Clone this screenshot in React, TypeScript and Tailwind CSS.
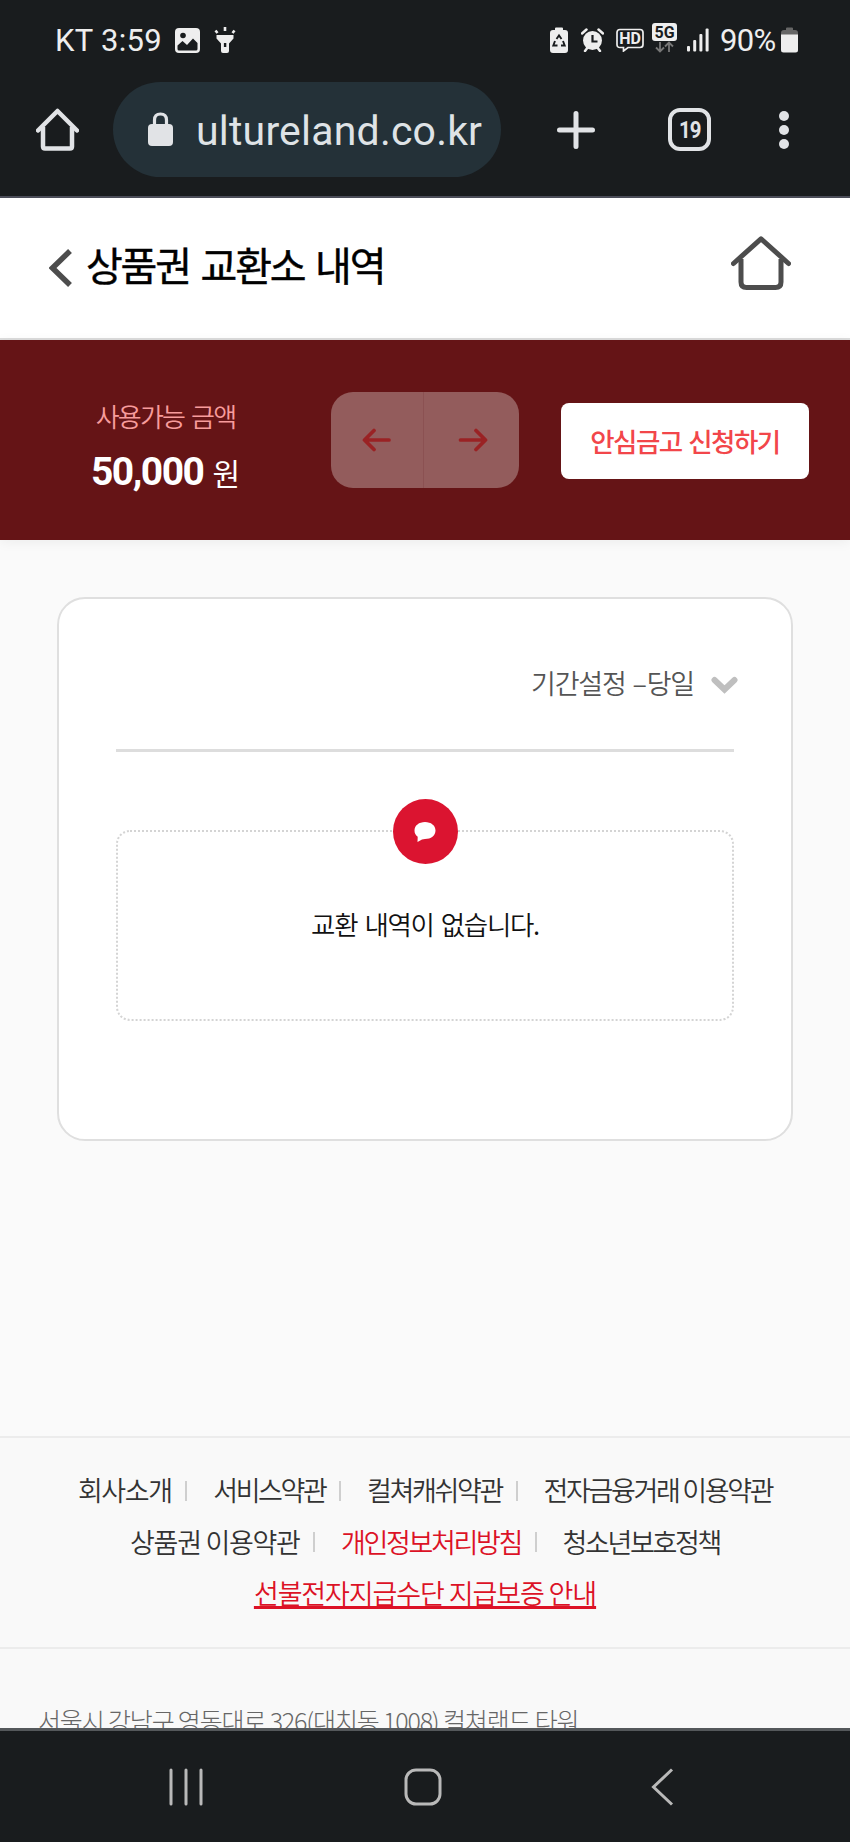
import type { ReactNode } from "react";

function StatusBar() {
  return (
    <div className="flex h-[82px] items-center pr-[52px] pb-[2px] pl-[55px] text-[30px] text-[#eeeeee]">
      <span className="mt-[2px] w-[120px] text-[31px] tracking-[0.3px] whitespace-nowrap">KT 3:59</span>
      <svg width="25" height="25" viewBox="0 0 25 25" fill="none">
        <rect width="25" height="25" rx="4" fill="#eee" />
        <circle cx="8" cy="7.5" r="2.8" fill="#191c1e" />
        <path d="M2.500 17.500 7.500 13l4.500 4L18 10.500l4.500 4.500v6q0 1.500-1.500 1.500H4q-1.500 0-1.500-1.500z" fill="#191c1e" />
      </svg>
      <svg className="ml-[14px]" width="22" height="28" viewBox="0 0 22 28" fill="#eee">
        <path d="M2.500 9h17v3.500L15 17.500V25q0 2-2 2H9q-2 0-2-2v-7.500L2.500 12.500z" />
        <path d="M11 1v4M1.500 4.500l2 2.500M20.500 4.500l-2 2.500" stroke="#eee" strokeWidth="2.600" />
        <rect x="9.900" y="17" width="2.400" height="4" fill="#191c1e" />
      </svg>

      <div className="ml-auto flex items-center">
        <svg width="18" height="27" viewBox="0 0 18 27" fill="none">
          <path d="M5 3V1.500Q5 .5 6 .5h6q1 0 1 1V3h2q3 0 3 3v17q0 3-3 3H3q-3 0-3-3V6q0-3 3-3z" fill="#eee" />
          <path d="M6.500 12 9 8.500l2.500 3.500M13 14l1.700 4.500H11M7.500 18.500H3.300L5 14" stroke="#191c1e" strokeWidth="1.900" />
        </svg>
        <svg className="ml-[13px]" width="23" height="24" viewBox="0 0 23 24" fill="none">
          <circle cx="11.500" cy="12.500" r="9.500" fill="#eee" />
          <path d="M1 5.500 5.500 1.500M22 5.500 17.500 1.500M4 23l3-4M19 23l-3-4" stroke="#eee" strokeWidth="2.500" strokeLinecap="round" />
          <path d="M11.500 7v6.500h5" stroke="#191c1e" strokeWidth="2.200" />
        </svg>
        <svg className="ml-[12px]" width="28" height="24" viewBox="0 0 28 24" fill="none">
          <path d="M4 1.500h20q3 0 3 3v12q0 3-3 3H12L7.500 23v-3.500H4q-3 0-3-3v-12q0-3 3-3z" stroke="#eee" strokeWidth="1.700" />
          <text x="14" y="16.200" textAnchor="middle" fill="#eee" fontSize="16" fontWeight="700">HD</text>
        </svg>
        <svg className="-mt-[5px] ml-[8px]" width="25" height="30" viewBox="0 0 25 30" fill="none">
          <rect width="25" height="18" rx="3" fill="#eee" />
          <text x="12.500" y="14.700" textAnchor="middle" fill="#191c1e" fontSize="16" fontWeight="700">5G</text>
          <path d="M8 19v9M4 24.500 8 28.500l4-4M17 29V19.500M13 23.500l4-4 4 4" stroke="#777" strokeWidth="1.800" />
        </svg>
        <svg className="ml-[10px]" width="22" height="24" viewBox="0 0 22 24" fill="#eee">
          <rect y="18" width="3" height="5.500" rx="1" />
          <rect x="6.200" y="12" width="3" height="11.500" rx="1" />
          <rect x="12.400" y="6" width="3" height="17.500" rx="1" />
          <rect x="18.600" y=".5" width="3" height="23" rx="1" />
        </svg>
        <span className="mt-[2px] ml-[11px] w-[61px] text-[31px] whitespace-nowrap tracking-[-0.7px]">90%</span>
        <svg width="17" height="26" viewBox="0 0 17 26">
          <path d="M5 3V1.500Q5 .5 6 .5h5q1 0 1 1V3h2q3 0 3 3v2H0V6q0-3 3-3z" fill="#666" />
          <path d="M0 7.500h17V23q0 2.500-2.500 2.500h-12Q0 25.500 0 23z" fill="#eee" />
        </svg>
      </div>
    </div>
  );
}

function BrowserBar() {
  return (
    <div className="flex h-[95px] items-center pl-9">
      <svg width="43" height="43" viewBox="0 0 43 43" fill="none" stroke="#e1e3e6" strokeWidth="4.500">
        <path d="M2 22.500 21.500 3 41 22.500" strokeLinecap="round" strokeLinejoin="round" />
        <path d="M7 19v19.500q0 2 2 2h25q2 0 2-2V19" />
      </svg>
      <div className="ml-[34px] flex h-[95px] w-[388px] items-center rounded-full bg-[#243138] pl-[35px]">
        <svg className="-mt-0.5" width="25" height="34" viewBox="0 0 25 34" fill="none">
          <rect y="12" width="25" height="22" rx="4" fill="#e1e3e6" />
          <path d="M6.500 14V8q0-6 6-6t6 6v6" stroke="#e1e3e6" strokeWidth="3.200" />
        </svg>
        <span className="mt-[5px] ml-[23px] text-[41px] tracking-[0.2px] whitespace-nowrap text-[#dfe3e6]">ultureland.co.kr</span>
      </div>
      <svg className="ml-[56px]" width="38" height="38" viewBox="0 0 38 38" stroke="#e1e3e6" strokeWidth="5" strokeLinecap="round">
        <path d="M19 2.500v33M2.500 19h33" />
      </svg>
      <div className="ml-[73px] flex size-[43px] items-center justify-center rounded-[12px] border-[4.5px] border-[#e1e3e6] text-[24px] font-bold tracking-[-1px] text-[#e1e3e6]">
        <span className="scale-x-85">19</span>
      </div>
      <div className="ml-[68px] flex flex-col gap-[4px]">
        <i className="size-[10px] rounded-full bg-[#e1e3e6]" />
        <i className="size-[10px] rounded-full bg-[#e1e3e6]" />
        <i className="size-[10px] rounded-full bg-[#e1e3e6]" />
      </div>
    </div>
  );
}

function PageHeader() {
  return (
    <header className="flex h-[142px] items-center border-b-2 border-[#dcdcdc] bg-white pl-[49px]">
      <svg className="-mt-[1px]" width="23" height="38" viewBox="0 0 23 38" fill="none" stroke="#4d4d4d" strokeWidth="5.500">
        <path d="M21 2 3.500 19 21 36" />
      </svg>
      <h1 className="-mt-[9px] ml-[14px] text-[40px] leading-none font-normal tracking-[-2.2px] whitespace-nowrap text-black [-webkit-text-stroke:0.4px] [word-spacing:4px]">
        상품권 교환소 내역
      </h1>
      <svg className="-mt-[10px] mr-[59px] ml-auto" width="60" height="54" viewBox="0 0 60 54" fill="none" stroke="#4d4d4d" strokeWidth="5">
        <path d="M2.500 27.500 30 2.800 57.500 27.500" strokeLinecap="round" strokeLinejoin="round" />
        <path d="M10 23v23q0 5.500 5.500 5.500h29q5.500 0 5.500-5.500V23" />
      </svg>
    </header>
  );
}

function Balance() {
  return (
    <section className="flex h-[200px] items-center bg-[#651416] text-white shadow-[0_2px_12px_rgba(0,0,0,0.06)]">
      <div className="flex w-[331px] flex-col items-center pt-[11px]">
        <p className="text-[26px] leading-[38px] font-[350] tracking-[-1.8px] text-[#f79c9c] [word-spacing:3px]">사용가능 금액</p>
        <p className="mt-[15px] text-[30px] leading-[44px]">
          <b className="font-[Roboto] text-[39px] tracking-[-1.5px]">50,000</b>
          <span className="ml-[9px]">원</span>
        </p>
      </div>
      <div className="flex h-24 w-[188px] items-center rounded-[22px] bg-[#935c5c] text-[#9a2224]">
        <div className="flex h-full w-[93px] items-center justify-center border-r border-[#8b5152]">
          <svg width="30" height="24" viewBox="0 0 30 24" fill="none" stroke="currentColor" strokeWidth="3.700" strokeLinecap="round" strokeLinejoin="round">
            <path d="M27 12H3M12 2.500 2.500 12l9.500 9.500" />
          </svg>
        </div>
        <div className="flex h-full flex-1 items-center justify-center pl-0.5">
          <svg width="30" height="24" viewBox="0 0 30 24" fill="none" stroke="currentColor" strokeWidth="3.700" strokeLinecap="round" strokeLinejoin="round">
            <path d="M2.500 12H27M18 2.500 27.500 12 18 21.500" />
          </svg>
        </div>
      </div>
      <button className="mt-[1px] ml-[42px] h-[76px] w-[248px] rounded-lg bg-white text-[26.5px] font-medium tracking-[-1.5px] whitespace-nowrap text-[#f2464a] [word-spacing:2px]">
        안심금고 신청하기
      </button>
    </section>
  );
}

function HistoryCard() {
  return (
    <section className="mx-[57px] mt-[57px] h-[544px] rounded-[28px] border-2 border-[#dfdfdf] bg-white px-[57px]">
      <div className="flex h-[153px] items-center justify-end border-b-3 border-[#dddddd] pt-[18px]">
        <span className="text-[27px] font-[350] tracking-[-1.2px] text-[#555]">
          기간설정 <span className="mr-[1px] ml-[2px] inline-block">–</span>당일
        </span>
        <svg className="mt-[3px] mr-[-4px] ml-[17px]" width="27" height="18" viewBox="0 0 27 18" fill="none" stroke="#bfbfbf" strokeWidth="6" strokeLinecap="round">
          <path d="M3.500 4 13.500 13.500 23.500 4" />
        </svg>
      </div>
      <div className="relative mt-[78px] flex h-[191px] items-center justify-center rounded-[14px] border-2 border-dotted border-[#d4d4d4]">
        <span className="absolute -top-[33px] flex size-[65px] items-center justify-center rounded-full bg-[#db1430]">
          <svg width="22" height="20" viewBox="0 0 22 20" fill="white">
            <path d="M11 0c6 0 10.500 3.500 10.500 8.500S17 17 11 17q-1.500 0-3 .4L3.500 20l.2-5.200Q.5 12.500.5 8.500C.5 3.500 5 0 11 0z" />
          </svg>
        </span>
        <p className="-mt-[3px] text-[26.5px] font-[350] tracking-[-1.3px] text-[#111] [word-spacing:2.500px]">교환 내역이 없습니다.</p>
      </div>
    </section>
  );
}

function FooterRow({ children }: { children: ReactNode }) {
  return <div className="flex h-[51.4px] items-center justify-center whitespace-nowrap">{children}</div>;
}

function Divider() {
  return <i className="mr-[26px] ml-[13.5px] h-5 w-[2px] bg-[#cfcfcf]" />;
}

function Footer() {
  return (
    <footer className="flex-1 overflow-hidden border-t-2 border-[#ececec] bg-[#f9f9f9]">
      <div className="h-[211px] border-b-2 border-[#ececec] pt-[27px] text-[27px] font-[350] tracking-[-2.35px] text-[#333]">
        <FooterRow>
          <a className="tracking-[-1.4px]">회사소개</a>
          <Divider />
          <a>서비스약관</a>
          <Divider />
          <a>컬쳐캐쉬약관</a>
          <Divider />
          <a>전자금융거래 이용약관</a>
        </FooterRow>
        <FooterRow>
          <a className="tracking-[-1.3px]">상품권 이용약관</a>
          <Divider />
          <a className="text-[#dc1226]">개인정보처리방침</a>
          <Divider />
          <a>청소년보호정책</a>
        </FooterRow>
        <FooterRow>
          <a className="tracking-[-1.1px] text-[#dc1226] underline decoration-[2.5px]">선불전자지급수단 지급보증 안내</a>
        </FooterRow>
      </div>
      <address className="mt-[52px] ml-[38px] text-[25px] leading-[38px] font-light tracking-[-1.15px] whitespace-nowrap text-[#666] not-italic">
        서울시 강남구 영동대로 326(대치동 1008) 컬쳐랜드 타워
      </address>
    </footer>
  );
}

function NavBar() {
  return (
    <nav className="flex h-[114px] items-center border-t-3 border-[#54585b] bg-[#191c1e] pl-[169px]">
      <svg width="35" height="38" viewBox="0 0 35 38" stroke="#b9b9b9" strokeWidth="3" strokeLinecap="round">
        <path d="M2 2v34M17 2v34M32 2v34" />
      </svg>
      <svg className="ml-[200px]" width="38" height="38" viewBox="0 0 38 38" fill="none" stroke="#b9b9b9" strokeWidth="3">
        <rect x="2" y="2" width="34" height="34" rx="10" />
      </svg>
      <svg className="ml-[209px]" width="23" height="38" viewBox="0 0 23 38" fill="none" stroke="#b9b9b9" strokeWidth="3">
        <path d="M21 1.500 2.500 19 21 36.500" />
      </svg>
    </nav>
  );
}

export default function App() {
  return (
    <div className="flex h-[1842px] w-[850px] flex-col overflow-hidden bg-[#fafafa] font-['Noto_Sans_CJK_KR',sans-serif]">
      <div className="h-[198px] shrink-0 border-b-2 border-[#4b4d59] bg-[#191c1e] font-[Roboto,sans-serif]">
        <StatusBar />
        <BrowserBar />
      </div>
      <PageHeader />
      <Balance />
      <main className="h-[896px] shrink-0">
        <HistoryCard />
      </main>
      <Footer />
      <NavBar />
    </div>
  );
}
